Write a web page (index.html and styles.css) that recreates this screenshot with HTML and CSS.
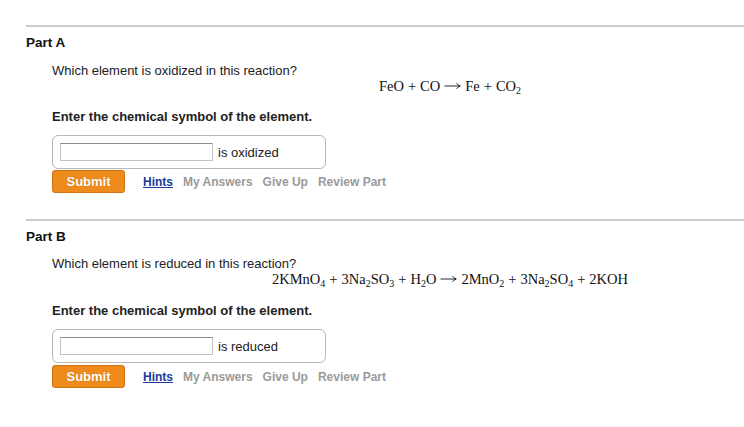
FILE: index.html
```html
<!DOCTYPE html>
<html>
<head>
<meta charset="utf-8">
<link rel="stylesheet" href="styles.css">
</head>
<body>
<div class="page">
  <section class="part part-a">
    <h2 class="part-title">Part A</h2>
    <div class="content">
      <p class="question">Which element is oxidized in this reaction?</p>
      <div class="equation">FeO<span class="op">+</span>CO<svg class="arrow" viewBox="0 0 17 8" width="17" height="8"><path d="M0.5 4H16M12.5 1.2Q13.8 3.2 16.3 4Q13.8 4.8 12.5 6.8" fill="none" stroke="#111" stroke-width="0.9"/></svg>Fe<span class="op">+</span>CO<sub>2</sub></div>
      <p class="prompt">Enter the chemical symbol of the element.</p>
      <div class="answer-box">
        <input class="answer-input" type="text">
        <span class="answer-label">is oxidized</span>
      </div>
      <div class="actions">
        <button class="submit">Submit</button>
        <a class="link hints" href="#">Hints</a>
        <span class="link muted">My Answers</span>
        <span class="link muted">Give Up</span>
        <span class="link muted">Review Part</span>
      </div>
    </div>
  </section>
  <section class="part part-b">
    <h2 class="part-title">Part B</h2>
    <div class="content">
      <p class="question">Which element is reduced in this reaction?</p>
      <div class="equation">2KMnO<sub>4</sub><span class="op">+</span>3Na<sub>2</sub>SO<sub>3</sub><span class="op">+</span>H<sub>2</sub>O<svg class="arrow" viewBox="0 0 17 8" width="17" height="8"><path d="M0.5 4H16M12.5 1.2Q13.8 3.2 16.3 4Q13.8 4.8 12.5 6.8" fill="none" stroke="#111" stroke-width="0.9"/></svg>2MnO<sub>2</sub><span class="op">+</span>3Na<sub>2</sub>SO<sub>4</sub><span class="op">+</span>2KOH</div>
      <p class="prompt">Enter the chemical symbol of the element.</p>
      <div class="answer-box">
        <input class="answer-input" type="text">
        <span class="answer-label">is reduced</span>
      </div>
      <div class="actions">
        <button class="submit">Submit</button>
        <a class="link hints" href="#">Hints</a>
        <span class="link muted">My Answers</span>
        <span class="link muted">Give Up</span>
        <span class="link muted">Review Part</span>
      </div>
    </div>
  </section>
</div>
</body>
</html>
```
FILE: styles.css
```css
html, body {
  margin: 0;
  padding: 0;
  background: #fff;
}
body {
  font-family: "Liberation Sans", Arial, sans-serif;
  color: #222;
  overflow: hidden;
}
.page {
  padding: 25px 0 0 26px;
}
.part {
  border-top: 2px solid #cccccc;
}
.part-a {
  padding-bottom: 26px;
}
.part-title {
  margin: 8px 0 0 0;
  font-size: 13.5px;
  line-height: 16px;
  font-weight: bold;
  color: #111;
}
.content {
  padding-left: 26px;
}
.question {
  margin: 12px 0 0 0;
  font-size: 13px;
  line-height: 16px;
}
.part-b .question {
  margin-top: 11px;
}
.equation {
  padding-left: 104px;
  text-align: center;
  font-family: "Liberation Serif", "Times New Roman", serif;
  font-size: 14.5px;
  line-height: 17px;
  color: #111;
  margin-top: -1px;
}
.equation sub {
  font-size: 10px;
  line-height: 0;
  vertical-align: -3px;
}
.op {
  margin: 0 4px;
}
.arrow {
  margin: 0 4px;
  vertical-align: 1px;
}
.prompt {
  margin: 14px 0 0 0;
  font-size: 13px;
  line-height: 16px;
  font-weight: bold;
  color: #222;
}
.part-b .prompt {
  margin-top: 15px;
}
.answer-box {
  margin-top: 10px;
  width: 258px;
  height: 18px;
  padding: 7px;
  border: 1px solid #b8b8b8;
  border-radius: 6px;
  display: flex;
  align-items: center;
  gap: 5px;
}
.answer-input {
  box-sizing: border-box;
  width: 153px;
  height: 18px;
  margin: 0;
  padding: 0;
  border: 1px solid #c2c2c2;
  border-top-color: #8a8a8a;
  background: #fff;
}
.answer-label {
  font-size: 13px;
  color: #222;
}
.actions {
  margin-top: 2px;
  display: flex;
  align-items: center;
}
.part-a .actions {
  margin-top: 1px;
}
.submit {
  width: 73px;
  height: 23px;
  padding: 0;
  margin: 0 18px 0 0;
  background: #ef8a1c;
  border: 1px solid #cf7314;
  border-radius: 3px;
  color: #fff;
  font-family: "Liberation Sans", Arial, sans-serif;
  font-size: 13px;
  font-weight: bold;
  text-shadow: 0 0 1px rgba(120, 60, 0, 0.4);
}
.link {
  font-size: 12px;
  font-weight: bold;
  margin-right: 10px;
}
.hints {
  color: #1a3b9a;
  text-decoration: underline;
}
.muted {
  color: #9a9a9a;
}
```
